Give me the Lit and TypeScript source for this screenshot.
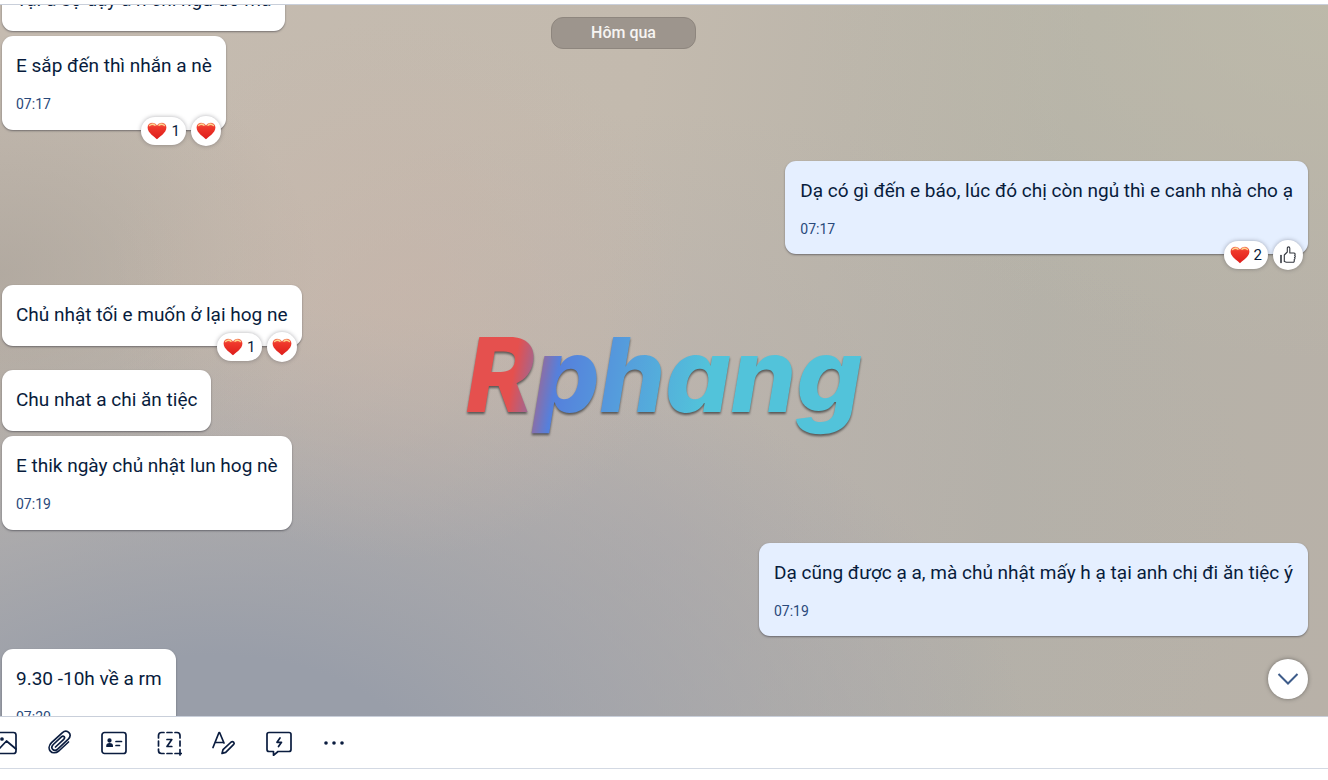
import { LitElement, html, svg, css, nothing } from "lit";
import { customElement, property } from "lit/decorators.js";

interface Message {
  text: string;
  time?: string;
  mine?: boolean;
  count?: number;
  gap: "tight" | "small" | "medium" | "large" | "first";
}

const MESSAGES: Message[] = [
  { text: "Tại a sợ dậy a h chi ngủ đó mà", gap: "first" },
  { text: "E sắp đến thì nhắn a nè", time: "07:17", count: 1, gap: "tight" },
  { text: "Dạ có gì đến e báo, lúc đó chị còn ngủ thì e canh nhà cho ạ", time: "07:17", mine: true, count: 2, gap: "large" },
  { text: "Chủ nhật tối e muốn ở lại hog ne", count: 1, gap: "large" },
  { text: "Chu nhat a chi ăn tiệc", gap: "medium" },
  { text: "E thik ngày chủ nhật lun hog nè", time: "07:19", gap: "tight" },
  { text: "Dạ cũng được ạ a, mà chủ nhật mấy h ạ tại anh chị đi ăn tiệc ý", time: "07:19", mine: true, gap: "small" },
  { text: "9.30 -10h về a rm", time: "07:20", gap: "small" },
];

const heart = html`<svg class="heart" viewBox="0 0 20 18" aria-hidden="true">
  <defs>
    <linearGradient id="h" x1="0" y1="0" x2="0" y2="1">
      <stop offset="0" stop-color="#f58a66" />
      <stop offset=".25" stop-color="#f0392c" />
      <stop offset="1" stop-color="#dd1c1a" />
    </linearGradient>
  </defs>
  <path fill="url(#h)" d="M10 17.3C8 14.9.6 11 .6 5.4.6 2.600 2.600.8 5.200.8 7.400.8 9.200 1.900 10 3.600 10.800 1.900 12.600.8 14.800.8c2.600 0 4.600 1.800 4.600 4.600 0 5.600-7.400 9.500-9.400 11.900z" />
  <path fill="none" stroke="#ffd890" stroke-width="1.300" stroke-linecap="round" d="M2.600 3.600C3.800 2 6.400 1.800 8 3.200M12 3.200c1.600-1.400 4.200-1.200 5.400.4" />
</svg>`;

const thumb = html`<svg class="thumb" viewBox="0 0 16 18" fill="none" stroke="#33373f" stroke-width="1.100" stroke-linejoin="round" stroke-linecap="round" aria-hidden="true">
  <path d="M4.300 15.500V9L7.300 6V2.200C7.300.4 9.800.4 9.800 2.200V7h4c1.500 0 1.700 1.700.8 2.200 1 .7.800 1.900-.1 2.300.8.7.5 1.900-.4 2.200.5 1.200 0 2.600-1.100 2.600H7c-1 0-1.600-.8-2.700-.8z" />
  <path d="M1 9.500v7" stroke-width="1.600" />
</svg>`;

const TOOLS = [
  { label: "Gửi hình ảnh", icon: svg`<rect x="1" y="2.500" width="24" height="21" rx="2.500"/><path d="M1 19l4-3.500 3.500 3 7-7.500 9.500 8"/><circle cx="11" cy="9" r="1"/>` },
  { label: "Đính kèm file", icon: svg`<path d="M8.500 17l8.200-7.700c2-1.900-.2-4.300-2.300-2.400L6.300 14.500c-3.600 3.600.6 8 4.400 4.600l10.600-9.900c5-5-1.300-10.600-6.100-6.400L4.500 12.700C-1.500 18.800 5 26.200 11.800 21l9.700-9" transform="translate(1 0)"/>` },
  { label: "Gửi danh thiếp", icon: svg`<rect x="1" y="2.500" width="24" height="21" rx="2.500"/><circle cx="8.500" cy="10.500" r="1.300" fill="currentColor"/><path fill="currentColor" d="M6 16.200c0-3 5.200-3 5.200 0z"/><path d="M15 11.500h5.500M15 15.500h3.500"/>` },
  { label: "Chụp màn hình", icon: svg`<path d="M2.500 8V5.500C2.500 3.500 3.500 2.500 5.500 2.500H8M11 2.500h5M19 2.500h2C23 2.500 24 3.500 24 5.500V8M2.500 11v5M24 11v5M2.500 19v1.500C2.500 22.500 3.500 23.500 5.500 23.500H8M11 23.500h5M19 23.500h6.500M24 19.500v5.500M11 9.500h4.800l-4.800 7h4.800"/>` },
  { label: "Định dạng tin nhắn", icon: svg`<path d="M2 17.500L8 2.500h.6L13 13M4 12.500h8.500"/><path d="M11 23.500l1-3.800L20.200 12c1.700-1.300 3.800.8 2.500 2.400l-8 8z"/>` },
  { label: "Tin nhắn nhanh", icon: svg`<path d="M3 2.500h20C24.300 2.500 25 3.300 25 4.500v15c0 1.200-.8 2-2 2H12L7.500 25.300V21.500H3c-1.200 0-2-.8-2-2v-15c0-1.200.8-2 2-2z"/><path d="M14 8L11 12.300h4.500L12.500 16.500"/>` },
  { label: "Thêm", icon: svg`<g fill="currentColor" stroke="none"><circle cx="5" cy="13" r="1.800"/><circle cx="13" cy="13" r="1.800"/><circle cx="21" cy="13" r="1.800"/></g>` },
];

@customElement("chat-bubble")
export class ChatBubble extends LitElement {
  @property({ attribute: false }) message!: Message;

  static styles = css`
    :host { display: block; max-width: 80%; }
    .bubble {
      position: relative;
      padding: 16px 14px 18px;
      border-radius: 11px;
      background: #fff;
      box-shadow: 0 1px 2px rgba(40, 40, 50, 0.5);
      color: #081c3c;
    }
    .mine { padding: 16px 15px 17px; background: #e5efff; }
    .text { margin: 0; font-size: 19px; line-height: 27px; }
    .time { display: block; margin-top: 14px; font-size: 14px; line-height: 19px; padding-top: 2px; margin-bottom: -2px; color: #29497a; }
    .reactions {
      position: absolute;
      right: 5px;
      bottom: -16px;
      display: flex;
      align-items: center;
      gap: 5px;
    }
    .pill, .react {
      display: flex;
      align-items: center;
      justify-content: center;
      box-sizing: border-box;
      border: 0;
      background: #fff;
      font: inherit;
      font-size: 15px;
      color: #081c3c;
      box-shadow: 0 0 4px rgba(30, 30, 40, 0.35);
    }
    .pill { gap: 4px; height: 28px; padding: 0 6px; border-radius: 14px; }
    .react { width: 30px; height: 30px; padding: 0; border-radius: 50%; }
    .heart { width: 20px; height: 18px; }
    .thumb { width: 16px; height: 18px; }
  `;

  render() {
    const m = this.message;
    return html`<div class="bubble ${m.mine ? "mine" : ""}">
      <p class="text">${m.text}</p>
      ${m.time ? html`<time class="time">${m.time}</time>` : nothing}
      ${m.count
        ? html`<div class="reactions">
            <button class="pill">${heart}<span>${m.count}</span></button>
            <button class="react" aria-label="Thả cảm xúc">${m.mine ? thumb : heart}</button>
          </div>`
        : nothing}
    </div>`;
  }
}

@customElement("app-root")
export class AppRoot extends LitElement {
  static styles = css`
    :host {
      display: flex;
      flex-direction: column;
      box-sizing: border-box;
      height: 100vh;
      padding: 4px 0 11px;
      background: #fff;
      font-family: Roboto, "Noto Sans", sans-serif;
    }
    .chat {
      position: relative;
      flex: 1;
      min-height: 0;
      overflow: hidden;
      border-top: 1px solid #c9cfda;
      background:
        radial-gradient(ellipse 22% 38% at 30% 40%, rgba(199, 181, 170, 0.7), transparent),
        radial-gradient(ellipse 24% 34% at 0% 38%, rgba(165, 158, 150, 0.6), transparent),
        radial-gradient(ellipse 62% 66% at 16% 108%, #999ea9 25%, rgba(153, 158, 169, 0)),
        radial-gradient(ellipse 45% 60% at 50% 75%, rgba(178, 172, 172, 0.6), transparent),
        radial-gradient(ellipse 40% 50% at 100% 0%, rgba(190, 187, 170, 0.8), transparent),
        linear-gradient(100deg, #c5bbb0 0%, #c3baae 45%, #b5b2a8 75%, #b8b1a8 100%);
    }
    .list { display: flex; flex-direction: column; align-items: flex-start; padding: 0 20px 0 2px; }
    .mine { align-self: flex-end; }
    .first { margin-top: -35px; }
    .tight { margin-top: 5px; }
    .small { margin-top: 13px; }
    .medium { margin-top: 24px; }
    .large { margin-top: 31px; }
    .day {
      position: absolute;
      top: 12px;
      left: 50%;
      margin-left: -113px;
      box-sizing: border-box;
      width: 145px;
      border: 1px solid #8e867e;
      border-radius: 12px;
      background: #9d958d;
      color: #f6f4f2;
      font-size: 16px;
      font-weight: 500;
      line-height: 30px;
      text-align: center;
    }
    .brand {
      position: absolute;
      top: 52%;
      left: 50%;
      translate: -50% -50%;
      padding: 0 12px;
      background: linear-gradient(100deg, #e5504e 16%, #5580dc 26%, #55a0dc 42%, #52c3da 60%);
      background-clip: text;
      -webkit-background-clip: text;
      color: transparent;
      font-family: Inter, Roboto, sans-serif;
      font-size: 103px;
      font-style: italic;
      font-weight: 800;
      line-height: 140px;
      filter: drop-shadow(0 2px 1px rgba(50, 50, 50, 0.7));
      pointer-events: none;
    }
    .down {
      position: absolute;
      right: 20px;
      bottom: 17px;
      display: grid;
      place-items: center;
      width: 40px;
      height: 40px;
      padding: 0;
      border: 0;
      border-radius: 50%;
      background: #fff;
      box-shadow: 0 0 4px rgba(40, 40, 40, 0.5);
    }
    .chevron { width: 22px; height: 14px; fill: none; stroke: #3e5c8a; stroke-width: 2; }
    .toolbar {
      display: flex;
      align-items: center;
      gap: 29px;
      height: 51px;
      margin-left: -9px;
      border-top: 1px solid #c9cfda;
      border-bottom: 1px solid #d3d9e3;
    }
    .tool { display: block; padding: 0; border: 0; background: none; color: #0a1c3f; }
    .icon { display: block; width: 26px; height: 26px; fill: none; stroke: currentColor; stroke-width: 1.7; stroke-linejoin: round; stroke-linecap: round; }
  `;

  render() {
    return html`
      <main class="chat">
        <div class="list">
          ${MESSAGES.map((m) => html`<chat-bubble class="${m.gap} ${m.mine ? "mine" : ""}" .message=${m}></chat-bubble>`)}
        </div>
        <div class="day">Hôm qua</div>
        <div class="brand">Rphang</div>
        <button class="down" aria-label="Xuống cuối">
          <svg class="chevron" viewBox="0 0 22 14"><path d="M1.500 2L11 11.500 20.500 2" /></svg>
        </button>
      </main>
      <nav class="toolbar" aria-label="Công cụ">
        ${TOOLS.map((t) => html`<button class="tool" aria-label=${t.label}><svg class="icon" viewBox="0 0 26 26">${t.icon}</svg></button>`)}
      </nav>
    `;
  }
}
